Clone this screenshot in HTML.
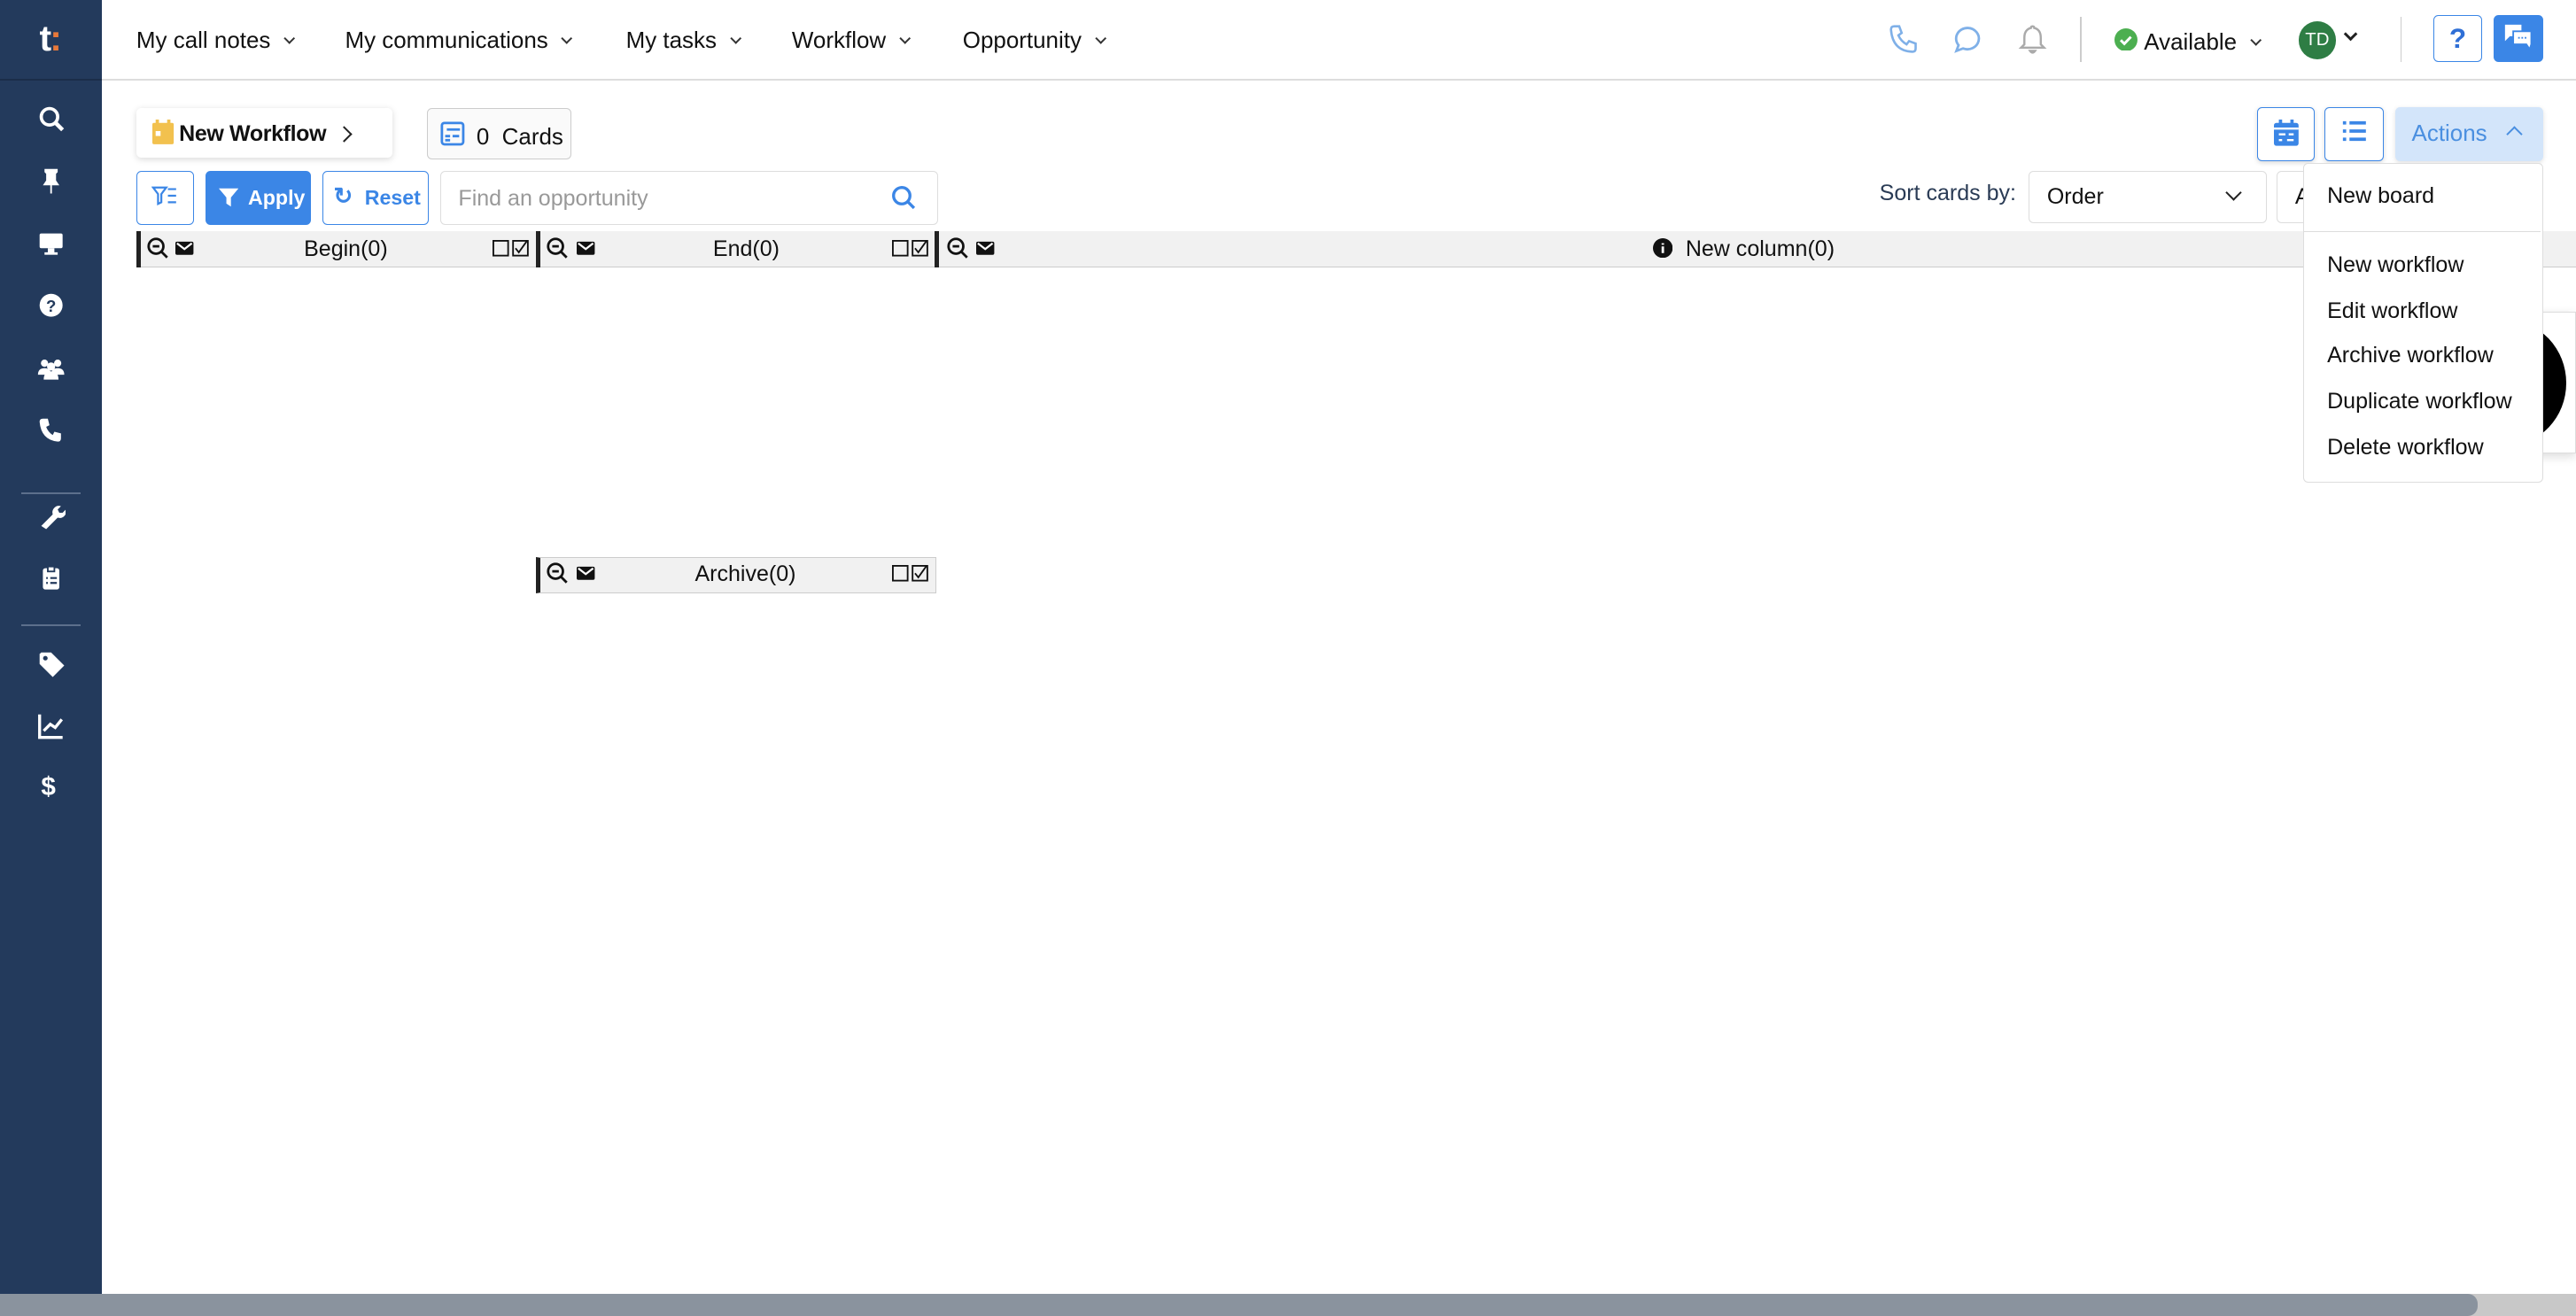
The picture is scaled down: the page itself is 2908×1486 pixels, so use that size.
<!DOCTYPE html>
<html><head><meta charset="utf-8"><style>
*{box-sizing:border-box;margin:0;padding:0}
html,body{width:2908px;height:1486px;overflow:hidden;background:#fff}
#w{zoom:1.8546;width:1568px;height:801px;position:relative;font-family:"Liberation Sans",Arial,sans-serif;color:#111;font-size:13.5px}
.a{position:absolute}
.side{left:0;top:0;width:62px;height:801px;background:#233a5c}
.si{left:22px;width:18px;height:18px;color:#fff}
.nav{top:16px;font-size:14px;color:#111}
.nav:after{content:"";display:inline-block;width:4px;height:4px;border-right:1.3px solid #333;border-bottom:1.3px solid #333;transform:rotate(45deg);margin-left:9px;position:relative;top:-3px}
.btn{border:1px solid #3b86e6;border-radius:3px;background:#fff}
.hdr{top:141px;height:22px;background:#f1f1f1;border-bottom:1px solid #ccc}
.col{height:22px;border-left:3px solid #222}
.dd div{position:absolute;left:14px;font-size:13.5px}
</style></head><body><div id="w">
<div class="a side"></div>
<div class="a" style="left:0;top:48px;width:62px;height:1px;background:#1b2d49"></div>
<div class="a" style="left:24px;top:11px;color:#fff;font-weight:bold;font-size:22px;letter-spacing:-1px">t<span style="color:#e8793a">:</span></div>
<svg class="a si" style="top:63px" viewBox="0 0 18 18"><circle cx="8" cy="8" r="5" fill="none" stroke="#fff" stroke-width="2"/><path d="M12 12l4 4" stroke="#fff" stroke-width="2.4"/></svg>
<svg class="a si" style="top:101px" viewBox="0 0 18 18"><path d="M5 2h8v2l-1 1v4l2 3H4l2-3V5L5 4z M8.5 12h1v5h-1z" fill="#fff"/></svg>
<svg class="a si" style="top:139px" viewBox="0 0 18 18"><rect x="2" y="3" width="14" height="9" rx="1" fill="#fff"/><rect x="7" y="12" width="4" height="3" fill="#fff"/><rect x="5" y="14.5" width="8" height="1.5" fill="#fff"/></svg>
<svg class="a si" style="top:177px" viewBox="0 0 18 18"><circle cx="9" cy="9" r="7" fill="#fff"/><text x="9" y="13" font-size="10" font-weight="bold" text-anchor="middle" fill="#233a5c" font-family="Liberation Sans">?</text></svg>
<svg class="a si" style="top:215px" viewBox="0 0 18 18"><circle cx="5" cy="6" r="2.2" fill="#fff"/><circle cx="13" cy="6" r="2.2" fill="#fff"/><circle cx="9" cy="8" r="2.5" fill="#fff"/><path d="M1 13q0-4 4-4 4 0 4 4zM9 13q0-4 4-4 4 0 4 4zM4.5 16q0-5 4.5-5t4.5 5z" fill="#fff"/></svg>
<svg class="a si" style="top:253px" viewBox="0 0 18 18"><path d="M4 2l3 0 1 4-2 1q1 3 4 5l1-2 4 1v3q0 2-2 2Q3 15 2 4q0-2 2-2z" fill="#fff"/></svg>
<div class="a" style="left:13px;top:300px;width:36px;height:1px;background:#5c6f8c"></div>
<svg class="a si" style="top:305px" viewBox="0 0 18 18"><path d="M3 15l7-7a4 4 0 0 1 5-5l-2 2 1 2 2 0 2-2a4 4 0 0 1-5 5l-7 7z" fill="#fff"/></svg>
<svg class="a si" style="top:343px" viewBox="0 0 18 18"><rect x="4" y="3" width="10" height="13" rx="1.5" fill="#fff"/><rect x="7" y="2" width="4" height="3" fill="#fff" stroke="#233a5c"/><path d="M6 9h1M6 12h1M8.5 9h4M8.5 12h4" stroke="#233a5c" stroke-width="1.2"/></svg>
<div class="a" style="left:13px;top:380px;width:36px;height:1px;background:#5c6f8c"></div>
<svg class="a si" style="top:395px" viewBox="0 0 18 18"><path d="M2 3v6l8 8 7-7-8-8H3z" fill="#fff"/><circle cx="5.5" cy="5.5" r="1.4" fill="#233a5c"/></svg>
<svg class="a si" style="top:433px" viewBox="0 0 18 18"><path d="M2 2v14h14" stroke="#fff" stroke-width="1.8" fill="none"/><path d="M4.5 12l4-4 3 2 4-5" stroke="#fff" stroke-width="1.8" fill="none"/></svg>
<div class="a" style="left:25px;top:470px;color:#fff;font-size:16px;font-weight:bold">$</div>

<div class="a" style="left:62px;top:48px;width:1506px;height:1px;background:#ddd"></div>
<div class="a nav" style="left:83px">My call notes</div>
<div class="a nav" style="left:210px">My communications</div>
<div class="a nav" style="left:381px">My tasks</div>
<div class="a nav" style="left:482px">Workflow</div>
<div class="a nav" style="left:586px">Opportunity</div>

<svg class="a" style="left:1149px;top:14px" width="20" height="20" viewBox="0 0 20 20"><path d="M4 2l3 0 1.5 4-2 1.5q1.5 3.5 5 5.5l1.5-2 4 1.5v3q0 2-2 2Q3 17 2 4q0-2 2-2z" fill="none" stroke="#7fb0e8" stroke-width="1.4"/></svg>
<svg class="a" style="left:1188px;top:14px" width="20" height="20" viewBox="0 0 20 20"><path d="M10 3a7 6.5 0 1 1-3 12.5L3 17l1.3-3.5A7 6.5 0 0 1 10 3z" fill="none" stroke="#7fb0e8" stroke-width="1.5"/></svg>
<svg class="a" style="left:1227px;top:14px" width="20" height="20" viewBox="0 0 20 20"><path d="M10 2q1 0 1 1 4 1 4 6v4l2 2H3l2-2V9q0-5 4-6 0-1 1-1zM8.5 17h3q-1.5 2-3 0z" fill="none" stroke="#aaa" stroke-width="1.3"/></svg>
<div class="a" style="left:1266px;top:10px;width:1px;height:28px;background:#ccc"></div>
<svg class="a" style="left:1287px;top:17px" width="14" height="14" viewBox="0 0 14 14"><circle cx="7" cy="7" r="7" fill="#4caf50"/><path d="M3.8 7.2l2.2 2.2 4-4.2" stroke="#fff" stroke-width="1.6" fill="none"/></svg>
<div class="a nav" style="left:1305px;top:17px">Available</div>
<div class="a" style="left:1399px;top:13px;width:23px;height:23px;border-radius:50%;background:#2e7d44;color:#fff;font-size:11px;text-align:center;line-height:23px">TD</div>
<div class="a" style="left:1428px;top:18px;width:6px;height:6px;border-right:1.8px solid #222;border-bottom:1.8px solid #222;transform:rotate(45deg)"></div>
<div class="a" style="left:1461px;top:10px;width:1px;height:28px;background:#ccc"></div>
<div class="a btn" style="left:1481px;top:9px;width:30px;height:29px;color:#2f6fd6;font-size:17px;font-weight:bold;text-align:center;line-height:27px">?</div>
<div class="a" style="left:1518px;top:9px;width:30px;height:29px;background:#3b86e6;border-radius:3px"></div>
<svg class="a" style="left:1524px;top:14px" width="18" height="18" viewBox="0 0 18 18"><path d="M1 1h10v7H4l-3 3z" fill="#fff"/><path d="M6 5h11v8l-1 3-2-3H6z" fill="#fff" stroke="#3b86e6"/><path d="M9 9h1M11 9h1M13 9h1" stroke="#3b86e6"/></svg>

<div class="a" style="left:83px;top:66px;width:156px;height:30px;background:#fff;border-radius:3px;box-shadow:0 1px 4px rgba(0,0,0,.15)"></div>
<svg class="a" style="left:93px;top:73px" width="13" height="15" viewBox="0 0 13 15"><rect x="0" y="2" width="13" height="13" rx="1" fill="#f2c14e"/><rect x="2" y="0" width="2" height="3" fill="#f2c14e"/><rect x="9" y="0" width="2" height="3" fill="#f2c14e"/><rect x="2" y="7" width="3" height="3" fill="#fff"/></svg>
<div class="a" style="left:109px;top:74px;font-size:13.5px;font-weight:bold;letter-spacing:-0.2px">New Workflow</div>
<div class="a" style="left:206px;top:78px;width:7px;height:7px;border-right:1.6px solid #222;border-top:1.6px solid #222;transform:rotate(45deg)"></div>
<div class="a" style="left:260px;top:66px;width:88px;height:31px;border:1px solid #ccc;border-radius:3px;background:#fafafa"></div>
<svg class="a" style="left:268px;top:74px" width="15" height="15" viewBox="0 0 15 15"><rect x="1" y="1" width="13" height="13" rx="1.5" fill="none" stroke="#3b86e6" stroke-width="1.5"/><path d="M3 9h3M3 11.5h3M7.5 9h4M4 5h8" stroke="#3b86e6" stroke-width="1.5"/></svg>
<div class="a" style="left:290px;top:75px;font-size:14px">0&nbsp; Cards</div>

<div class="a btn" style="left:83px;top:104px;width:35px;height:33px"></div>
<svg class="a" style="left:92px;top:112px" width="16" height="15" viewBox="0 0 16 15"><path d="M1 2h8l-3 4v5l-2 1V6z" fill="none" stroke="#3b86e6" stroke-width="1.2"/><path d="M10 3h5M10 7h5M10 11h5" stroke="#3b86e6" stroke-width="1.2"/></svg>
<div class="a" style="left:125px;top:104px;width:64px;height:33px;background:#3b86e6;border-radius:3px"></div>
<svg class="a" style="left:133px;top:113px" width="12" height="14" viewBox="0 0 13 14"><path d="M0 1h13L8 7v6L5 11V7z" fill="#fff"/></svg>
<div class="a" style="left:151px;top:113px;color:#fff;font-size:12.5px;font-weight:bold">Apply</div>
<div class="a btn" style="left:196px;top:104px;width:65px;height:33px"></div>
<div class="a" style="left:203px;top:111px;color:#3b86e6;font-size:14px;font-weight:bold">↻</div>
<div class="a" style="left:222px;top:113px;color:#3b86e6;font-size:12.5px;font-weight:bold">Reset</div>
<div class="a" style="left:268px;top:104px;width:303px;height:33px;border:1px solid #ddd;border-radius:3px"></div>
<div class="a" style="left:279px;top:113px;color:#999;font-size:13.5px">Find an opportunity</div>
<svg class="a" style="left:542px;top:112px" width="16" height="16" viewBox="0 0 16 16"><circle cx="7" cy="7" r="5" fill="none" stroke="#3b86e6" stroke-width="1.8"/><path d="M10.5 10.5l4 4" stroke="#3b86e6" stroke-width="1.8"/></svg>

<div class="a hdr" style="left:83px;width:1485px"></div>
<div class="a col" style="left:83px;top:141px;width:244px"></div>
<div class="a col" style="left:326px;top:141px;width:244px"></div>
<div class="a col" style="left:569px;top:141px;width:999px"></div>
<div class="a" style="left:326px;top:339px;width:244px;height:22px;background:#f1f1f1;border:1px solid #ccc;border-left:3px solid #222"></div>
<svg width="0" height="0" style="position:absolute"><defs>
<g id="z"><circle cx="6" cy="6" r="4.5" fill="none" stroke="#111" stroke-width="1.5"/><path d="M4 6h4M9.3 9.3l3.5 3.5" stroke="#111" stroke-width="1.5"/></g>
<g id="m"><rect x="0" y="1" width="11" height="8" rx="1" fill="#111"/><path d="M1 2l4.5 3.5L10 2" stroke="#fff" stroke-width="1.2" fill="none"/></g>
<g id="c"><rect x="0.5" y="0.5" width="9" height="9" fill="none" stroke="#111"/><rect x="12.5" y="0.5" width="9" height="9" fill="none" stroke="#111"/><path d="M14 5l2 2.5 5-7" stroke="#111" fill="none"/></g>
</defs></svg>
<svg class="a" style="left:89px;top:144px" width="14" height="14"><use href="#z"/></svg>
<svg class="a" style="left:107px;top:146px" width="12" height="10"><use href="#m"/></svg>
<div class="a" style="left:185px;top:144px">Begin(0)</div>
<svg class="a" style="left:300px;top:146px" width="23" height="11"><use href="#c"/></svg>
<svg class="a" style="left:332px;top:144px" width="14" height="14"><use href="#z"/></svg>
<svg class="a" style="left:351px;top:146px" width="12" height="10"><use href="#m"/></svg>
<div class="a" style="left:434px;top:144px">End(0)</div>
<svg class="a" style="left:543px;top:146px" width="23" height="11"><use href="#c"/></svg>
<svg class="a" style="left:576px;top:144px" width="14" height="14"><use href="#z"/></svg>
<svg class="a" style="left:594px;top:146px" width="12" height="10"><use href="#m"/></svg>
<svg class="a" style="left:1006px;top:145px" width="12" height="12"><circle cx="6" cy="6" r="6" fill="#111"/><path d="M6 5v4M6 3v1" stroke="#fff" stroke-width="1.5"/></svg>
<div class="a" style="left:1026px;top:144px">New column(0)</div>
<svg class="a" style="left:332px;top:342px" width="14" height="14"><use href="#z"/></svg>
<svg class="a" style="left:351px;top:344px" width="12" height="10"><use href="#m"/></svg>
<div class="a" style="left:423px;top:342px">Archive(0)</div>
<svg class="a" style="left:543px;top:344px" width="23" height="11"><use href="#c"/></svg>

<div class="a" style="left:1144px;top:110px;color:#2a3b55;font-size:13.5px">Sort cards by:</div>
<div class="a" style="left:1235px;top:104px;width:145px;height:32px;border:1px solid #ddd;border-radius:3px"></div>
<div class="a" style="left:1246px;top:112px;font-size:13.5px">Order</div>
<div class="a" style="left:1356px;top:114px;width:7px;height:7px;border-right:1.5px solid #222;border-bottom:1.5px solid #222;transform:rotate(45deg)"></div>
<div class="a" style="left:1386px;top:104px;width:40px;height:32px;border:1px solid #ddd;border-radius:3px"></div>
<div class="a" style="left:1397px;top:112px">A</div>

<div class="a btn" style="left:1374px;top:65px;width:35px;height:33px;box-shadow:0 1px 3px rgba(0,0,0,.15)"></div>
<svg class="a" style="left:1384px;top:73px" width="15" height="16" viewBox="0 0 15 16"><rect x="0" y="2" width="15" height="14" rx="1.5" fill="#3b86e6"/><rect x="3" y="0" width="2" height="3" fill="#3b86e6"/><rect x="10" y="0" width="2" height="3" fill="#3b86e6"/><path d="M0 5.5h15M3 9h4M9 9h3M3 12.5h2M8 12.5h4" stroke="#fff" stroke-width="1.3"/></svg>
<div class="a btn" style="left:1415px;top:65px;width:36px;height:33px;box-shadow:0 1px 3px rgba(0,0,0,.15)"></div>
<svg class="a" style="left:1425px;top:73px" width="16" height="15" viewBox="0 0 16 15"><path d="M1 2h2M1 7h2M1 12h2M5 2h10M5 7h10M5 12h10" stroke="#3b86e6" stroke-width="2"/></svg>
<div class="a" style="left:1458px;top:65px;width:90px;height:33px;background:#d3e5fa;border-radius:3px;box-shadow:0 1px 3px rgba(0,0,0,.12)"></div>
<div class="a" style="left:1468px;top:73px;color:#4a8fe0;font-size:14px">Actions</div>
<div class="a" style="left:1527px;top:78px;width:7px;height:7px;border-left:1.6px solid #4a8fe0;border-top:1.6px solid #4a8fe0;transform:rotate(45deg)"></div>

<div class="a" style="left:1540px;top:190px;width:28px;height:86px;background:#fff;border:1px solid #ddd;box-shadow:0 2px 6px rgba(0,0,0,.15)"></div>
<div class="a" style="left:1490px;top:195px;width:72px;height:76px;border-radius:50%;background:#000"></div>
<div class="a dd" style="left:1402px;top:99px;width:146px;height:195px;background:#fff;border:1px solid #ddd;border-radius:3px">
<div style="top:12px">New board</div>
<div style="top:41px;left:0;width:144px;height:1px;background:#ddd"></div>
<div style="top:54px">New workflow</div>
<div style="top:82px">Edit workflow</div>
<div style="top:109px">Archive workflow</div>
<div style="top:137px">Duplicate workflow</div>
<div style="top:165px">Delete workflow</div>
</div>

<div class="a" style="left:0;top:788px;width:1568px;height:13px;background:#c8c8c8"></div>
<div class="a" style="left:0;top:788px;width:1508px;height:13px;background:#8a939e;border-radius:0 6px 6px 0"></div>
</div></body></html>
